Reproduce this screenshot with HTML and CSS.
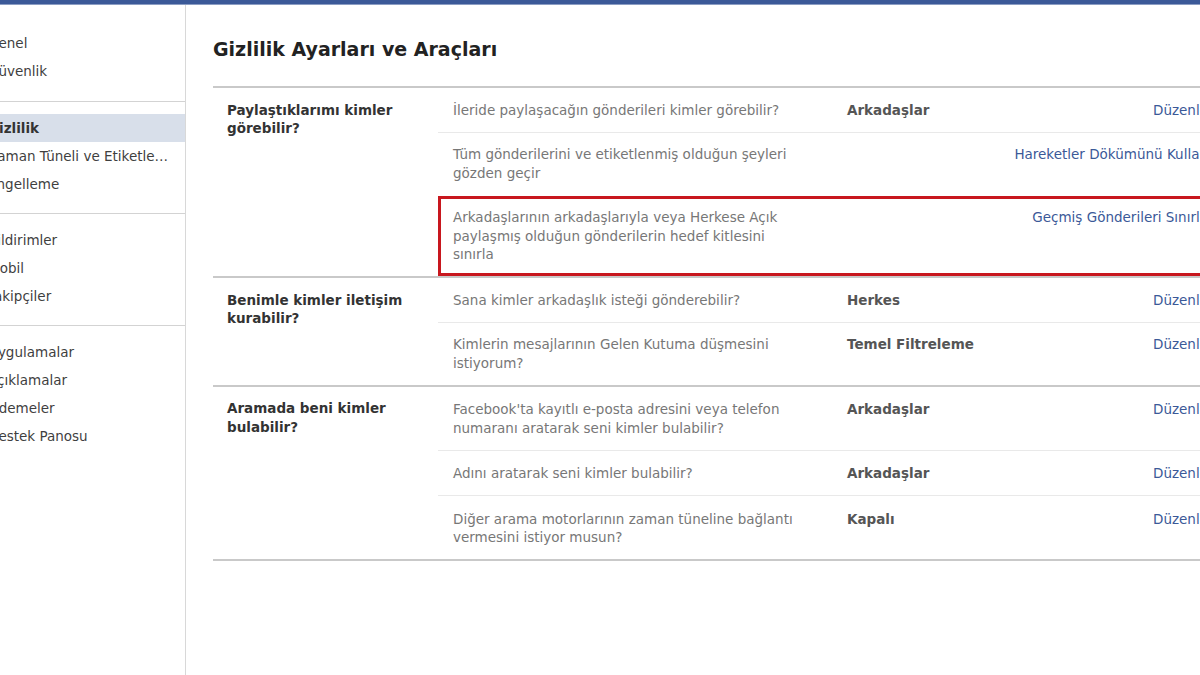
FILE: index.html
```html
<!DOCTYPE html>
<html>
<head>
    <meta charset="utf-8">
    <title>Gizlilik Ayarları ve Araçları</title>
    <link rel="stylesheet" href="styles.css">
</head>
<body>
    <div class="topbar"></div>

    <div class="page">
        <nav class="sidebar">
            <ul class="nav-group">
                <li>Genel</li>
                <li>Güvenlik</li>
            </ul>
            <ul class="nav-group">
                <li class="active">Gizlilik</li>
                <li>Zaman Tüneli ve Etiketleme</li>
                <li>Engelleme</li>
            </ul>
            <ul class="nav-group">
                <li>Bildirimler</li>
                <li>Mobil</li>
                <li>Takipçiler</li>
            </ul>
            <ul class="nav-group">
                <li>Uygulamalar</li>
                <li>Açıklamalar</li>
                <li>Ödemeler</li>
                <li>Destek Panosu</li>
            </ul>
        </nav>

        <main class="content">
            <h2 class="page-title">Gizlilik Ayarları ve Araçları</h2>

            <div class="settings">
                <section class="settings-section">
                    <h3 class="section-title">Paylaştıklarımı kimler görebilir?</h3>
                    <div class="section-rows">
                        <div class="setting-row">
                            <div class="setting-label">İleride paylaşacağın gönderileri kimler görebilir?</div>
                            <div class="setting-value">Arkadaşlar</div>
                            <a class="setting-action" href="#">Düzenle</a>
                        </div>
                        <div class="setting-row">
                            <div class="setting-label">Tüm gönderilerini ve etiketlenmiş olduğun şeyleri gözden geçir</div>
                            <div class="setting-value"></div>
                            <a class="setting-action" href="#">Hareketler Dökümünü Kullan</a>
                        </div>
                        <div class="setting-row highlighted">
                            <div class="setting-label">Arkadaşlarının arkadaşlarıyla veya Herkese Açık paylaşmış olduğun gönderilerin hedef kitlesini<br>sınırla</div>
                            <div class="setting-value"></div>
                            <a class="setting-action" href="#">Geçmiş Gönderileri Sınırla</a>
                        </div>
                    </div>
                </section>

                <section class="settings-section">
                    <h3 class="section-title">Benimle kimler iletişim kurabilir?</h3>
                    <div class="section-rows">
                        <div class="setting-row">
                            <div class="setting-label">Sana kimler arkadaşlık isteği gönderebilir?</div>
                            <div class="setting-value">Herkes</div>
                            <a class="setting-action" href="#">Düzenle</a>
                        </div>
                        <div class="setting-row">
                            <div class="setting-label">Kimlerin mesajlarının Gelen Kutuma düşmesini istiyorum?</div>
                            <div class="setting-value">Temel Filtreleme</div>
                            <a class="setting-action" href="#">Düzenle</a>
                        </div>
                    </div>
                </section>

                <section class="settings-section">
                    <h3 class="section-title">Aramada beni kimler bulabilir?</h3>
                    <div class="section-rows">
                        <div class="setting-row">
                            <div class="setting-label">Facebook'ta kayıtlı e-posta adresini veya telefon numaranı aratarak seni kimler bulabilir?</div>
                            <div class="setting-value">Arkadaşlar</div>
                            <a class="setting-action" href="#">Düzenle</a>
                        </div>
                        <div class="setting-row">
                            <div class="setting-label">Adını aratarak seni kimler bulabilir?</div>
                            <div class="setting-value">Arkadaşlar</div>
                            <a class="setting-action" href="#">Düzenle</a>
                        </div>
                        <div class="setting-row">
                            <div class="setting-label">Diğer arama motorlarının zaman tüneline bağlantı vermesini istiyor musun?</div>
                            <div class="setting-value">Kapalı</div>
                            <a class="setting-action" href="#">Düzenle</a>
                        </div>
                    </div>
                </section>
            </div>
        </main>
    </div>
</body>
</html>
```

FILE: styles.css
```css
html, body {
    margin: 0;
    padding: 0;
    background-color: #FFFFFF;
    overflow: hidden;
}

body {
    font-family: "DejaVu Sans", Verdana, sans-serif;
    font-size: 13.5px;
    color: #333333;
}

.topbar {
    height: 4px;
    background-color: #3B5998;
    border-bottom: 1px solid #8B9DC3;
}

.page {
    display: flex;
    margin-left: -22px;
    min-height: 670px;
}

/* left navigation */
.sidebar {
    flex: 0 0 207px;
    min-width: 0;
    overflow: hidden;
    border-right: 1px solid #D8D8D8;
}

.nav-group {
    list-style: none;
    margin: 0;
    padding: 12px 0 15px;
    border-bottom: 1px solid #D3D3D3;
}

.nav-group:first-child {
    padding-top: 24px;
    padding-bottom: 16px;
}

.nav-group:last-child {
    border-bottom: none;
}

.nav-group li {
    height: 28px;
    line-height: 28px;
    padding: 0 12px 0 10px;
    white-space: nowrap;
    overflow: hidden;
    text-overflow: ellipsis;
    color: #3F3F3F;
}

.nav-group li.active {
    background-color: #D8DFEA;
    font-weight: bold;
    color: #333333;
}

/* main area */
.content {
    flex: 0 0 1002px;
    padding-left: 27px;
}

.page-title {
    margin: 30px 0 23px;
    font-size: 19px;
    line-height: 28px;
    color: #222222;
}

.settings-section {
    display: grid;
    grid-template-columns: 225px 1fr;
    border-top: 2px solid #C9C9C9;
}

.settings-section:last-child {
    border-bottom: 2px solid #C9C9C9;
}

.section-title {
    margin: 0;
    padding: 12.5px 14px;
    font-size: 13.5px;
    line-height: 18.5px;
    color: #333333;
}

.setting-row {
    display: grid;
    grid-template-columns: 378px 1fr auto;
    column-gap: 16px;
    padding: 12.5px 7px 12.5px 15px;
    line-height: 18.5px;
    border-top: 1px solid #E9E9E9;
}

.setting-row:first-child {
    border-top: none;
}

.settings-section:last-child .setting-row {
    padding-top: 13.5px;
}

.setting-row.highlighted {
    border-top-color: transparent;
    box-shadow: inset 0 0 0 3px #C8171E;
}

.setting-label {
    color: #777777;
}

.setting-value {
    color: #555555;
    font-weight: bold;
}

.setting-action {
    color: #3B5998;
    text-decoration: none;
    text-align: right;
    white-space: nowrap;
}
```
